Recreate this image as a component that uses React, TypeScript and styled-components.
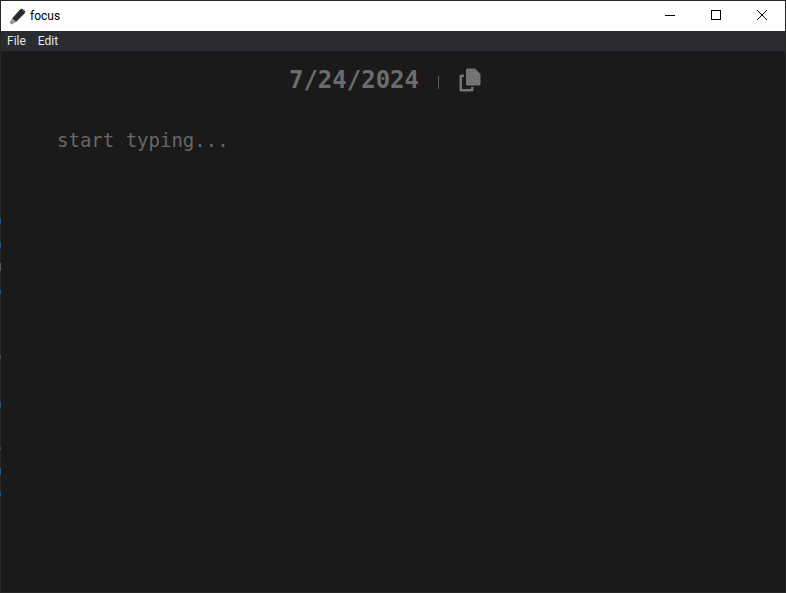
import styled, { createGlobalStyle } from 'styled-components';

const GlobalStyle = createGlobalStyle`
    html, body, #root {
        margin: 0;
        padding: 0;
        height: 100%;
        overflow: hidden;
    }
`;

const Window = styled.div`
    position: relative;
    box-sizing: border-box;
    width: 786px;
    height: 593px;
    display: flex;
    flex-direction: column;
    border: 1px solid #262626;
    background-color: #1a1a1a;
    font-family: 'Roboto', 'Noto Sans', sans-serif;
`;

const TitleBar = styled.div`
    height: 30px;
    flex: none;
    display: flex;
    align-items: center;
    background-color: #ffffff;
    padding-left: 8px;
`;

const AppTitle = styled.span`
    margin-left: 4px;
    font-size: 12px;
    color: #000000;
`;

const WindowControls = styled.div`
    margin-left: auto;
    display: flex;
    height: 100%;
`;

const ControlButton = styled.div`
    box-sizing: border-box;
    width: 46px;
    height: 100%;
    padding-bottom: 2px;
    display: flex;
    align-items: center;
    justify-content: center;
`;

const MenuBar = styled.div`
    height: 20px;
    flex: none;
    display: flex;
    align-items: center;
    gap: 12px;
    padding-left: 6px;
    background-color: #2a2c31;
`;

const MenuItem = styled.span`
    font-size: 12px;
    color: #e8e8e8;
`;

const Content = styled.main`
    flex: 1;
    display: flex;
    flex-direction: column;
`;

const Header = styled.div`
    display: flex;
    align-items: center;
    justify-content: center;
    height: 34px;
    margin-top: 12px;
    padding-right: 16px;
`;

const DateText = styled.span`
    font-family: 'DejaVu Sans Mono', 'Liberation Mono', monospace;
    font-weight: 700;
    font-size: 24px;
    color: #6c6c6c;
`;

const Divider = styled.span`
    width: 1px;
    height: 13px;
    margin: 4px 20px 0 19px;
    background-color: #5a5d6a;
`;

const Editor = styled.div`
    margin-top: 31px;
    padding-left: 56px;
    font-family: 'DejaVu Sans Mono', 'Liberation Mono', monospace;
    font-size: 19px;
    line-height: 24px;
    color: #666666;
`;

const EdgeTick = styled.span<{ $top: number; $size: number; $color: string }>`
    position: absolute;
    left: -1px;
    width: 1px;
    top: ${(p) => p.$top}px;
    height: ${(p) => p.$size}px;
    background-color: ${(p) => p.$color};
`;

const edgeTicks = [
    { top: 217, size: 6, color: '#1d4f80' },
    { top: 241, size: 6, color: '#1d4f80' },
    { top: 262, size: 8, color: '#55605c' },
    { top: 289, size: 4, color: '#1d4f80' },
    { top: 354, size: 4, color: '#3a4a58' },
    { top: 401, size: 6, color: '#2a5670' },
    { top: 446, size: 3, color: '#3a4a58' },
    { top: 467, size: 7, color: '#1d5a85' },
    { top: 491, size: 4, color: '#1d4f80' },
];

const PenIcon = () => (
    <svg width="17" height="17" viewBox="0 0 17 17">
        <path d="M11 1.5 L13 0.5 L16.5 3.5 L15.5 5.5 L7 14 L3 10.5 Z" fill="#2b2b2b" />
        <path d="M12.5 1.5 L15.5 4" stroke="#666" strokeWidth="1" />
        <path d="M3 10.5 L7 14 L2.5 16.5 L0.5 15 Z" fill="#8f99a1" />
    </svg>
);

const CopyIcon = () => (
    <svg width="22" height="24" viewBox="0 0 22 24">
        <path
            d="M8.5 0.5 a1.5 1.5 0 0 0 -1.5 1.5 V16 a1.5 1.5 0 0 0 1.5 1.5 H20 a1.5 1.5 0 0 0 1.5 -1.5 V6 L16 0.5 Z"
            fill="#737373"
        />
        <path
            d="M5 6.5 H2 a1.5 1.5 0 0 0 -1.5 1.5 V22 a1.5 1.5 0 0 0 1.5 1.5 H13 a1.5 1.5 0 0 0 1.5 -1.5 V19 H12 V21 H3 V9 H5 Z"
            fill="#737373"
        />
    </svg>
);

const App = () => {
    return (
        <>
            <GlobalStyle />
            <Window>
                <TitleBar>
                    <PenIcon />
                    <AppTitle>focus</AppTitle>
                    <WindowControls>
                        <ControlButton>
                            <svg width="10" height="10" viewBox="0 0 10 10">
                                <path d="M0 5.5 H10" stroke="#000" strokeWidth="1" />
                            </svg>
                        </ControlButton>
                        <ControlButton>
                            <svg width="10" height="10" viewBox="0 0 10 10">
                                <rect x="0.5" y="0.5" width="9" height="9" fill="none" stroke="#000" strokeWidth="1" />
                            </svg>
                        </ControlButton>
                        <ControlButton>
                            <svg width="10" height="10" viewBox="0 0 10 10">
                                <path d="M0 0 L10 10 M10 0 L0 10" stroke="#000" strokeWidth="1" />
                            </svg>
                        </ControlButton>
                    </WindowControls>
                </TitleBar>
                <MenuBar>
                    <MenuItem>File</MenuItem>
                    <MenuItem>Edit</MenuItem>
                </MenuBar>
                <Content>
                    <Header>
                        <DateText>7/24/2024</DateText>
                        <Divider />
                        <CopyIcon />
                    </Header>
                    <Editor>start typing...</Editor>
                </Content>
                {edgeTicks.map((t) => (
                    <EdgeTick key={t.top} $top={t.top} $size={t.size} $color={t.color} />
                ))}
            </Window>
        </>
    );
};

export default App;
